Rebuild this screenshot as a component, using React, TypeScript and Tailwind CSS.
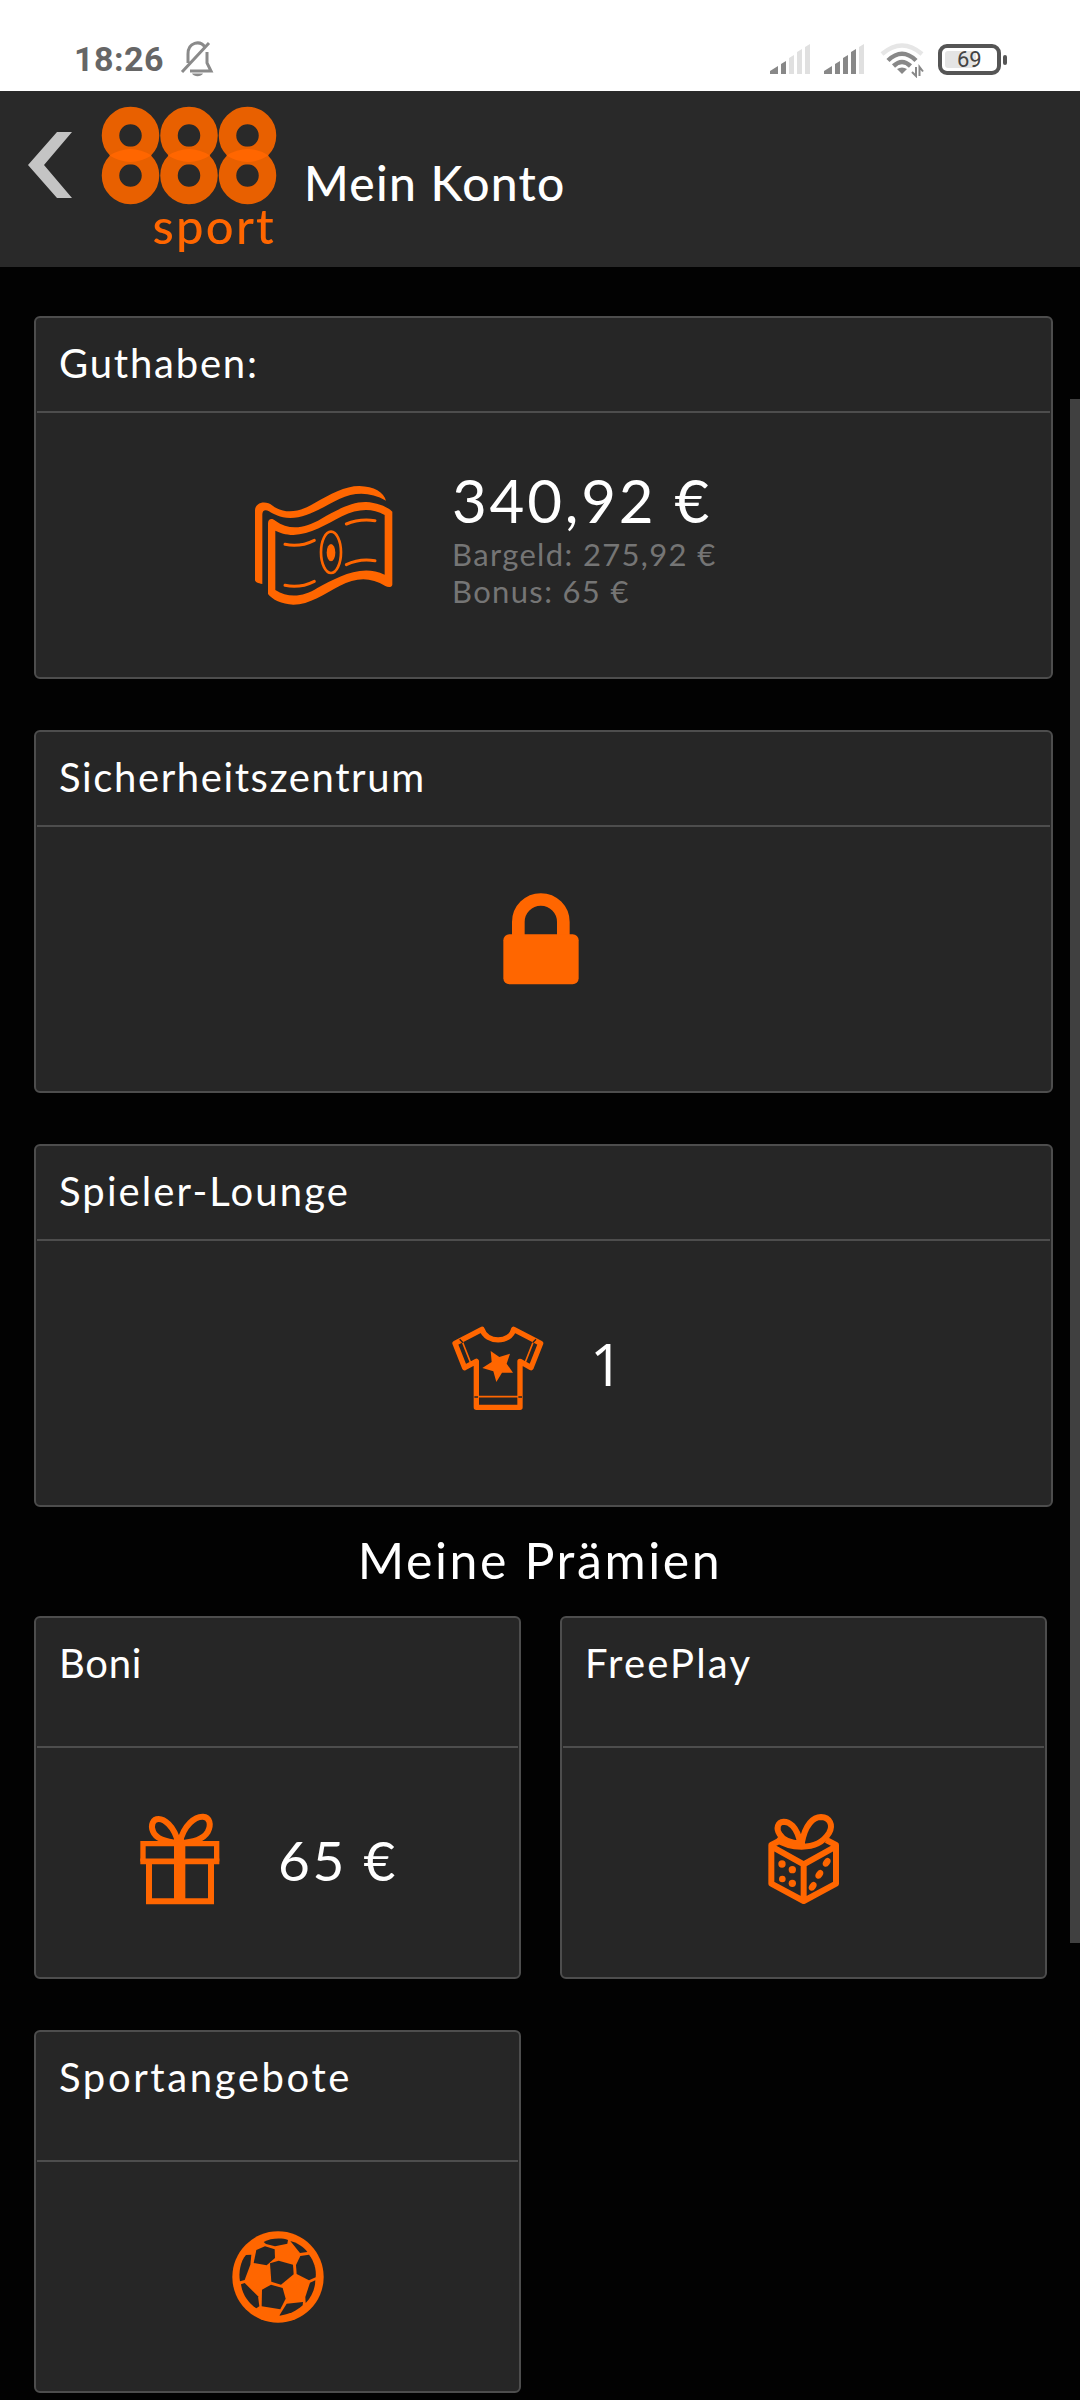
import React from 'react';
import clsx from 'clsx';

const MoneyIcon = () => (
  <svg width="144" height="126" viewBox="66 66 432 378" fill="none" stroke="#ff6600">
    <path
      d="M75 360V152C75 126 108 120 128 137C165 164 208 157 254 129C300 103 345 78 388 78C432 79 462 97 468 122C420 95 374 96 328 117C285 137 232 174 181 174C148 173 132 163 117 154C105 147 97 152 97 163V372C84 370 75 366 75 360Z"
      fill="#ff6600"
      stroke="none"
    />
    <path
      fillRule="evenodd"
      d="M114 190C114 176 126 173 136 182C178 213 226 205 274 176C320 150 365 125 408 126C442 128 474 141 487 155V374C486 383 474 383 466 378C420 349 376 353 330 377C285 401 238 434 190 434C155 433 126 418 114 402ZM136 212V390C176 416 222 410 262 384C320 354 392 310 464 344V165C424 143 382 147 336 169C290 193 240 224 190 225C166 224 150 219 136 212Z"
      fill="#ff6600"
      stroke="none"
    />
    <path
      d="M165 253C192 259 225 255 253 241M165 376C192 382 225 378 253 364M349 192C375 181 405 178 435 182M349 314C375 301 405 297 435 302"
      strokeWidth="9"
      strokeLinecap="round"
    />
    <ellipse cx="303" cy="277" rx="30" ry="62" strokeWidth="8" />
    <ellipse cx="303" cy="278" rx="13" ry="26" fill="#ff6600" stroke="none" />
  </svg>
);

const LockIcon = () => (
  <svg width="76" height="92" viewBox="69 68 228 276" fill="none">
    <path d="M115 205V155A67.500 67.500 0 0 1 250 155V205" stroke="#ff6600" strokeWidth="38" />
    <rect x="70" y="192" width="226" height="150" rx="18" fill="#ff6600" />
  </svg>
);

const ShirtIcon = () => (
  <svg width="92" height="86" viewBox="65 78 276 258" fill="none" stroke="#ff6600">
    <path
      d="M155 88L74 130L103 203L138 184V322H269V184L302 203L331 130L250 88C240 130 167 130 155 88Z"
      strokeWidth="16"
      strokeLinejoin="round"
    />
    <path d="M94 120L120 186M311 120L285 186M138 290H269" strokeWidth="5" />
    <path d="M88 118L98 128M317 118L307 128M132 291H143M264 291H275" stroke="#262626" strokeWidth="4" />
    <path
      d="M181 153L207 171L239 161L229 191L248 218L215 218L198 246L189 214L156 204L184 186Z"
      fill="#ff6600"
      stroke="none"
    />
  </svg>
);

const GiftIcon = () => (
  <svg width="80" height="92" viewBox="59 70 240 276" fill="none" stroke="#ff6600">
    <path
      d="M174 160C160 105 130 88 115 88C98 88 90 105 98 125C105 143 130 156 174 160ZM178 160C190 105 225 80 248 81C268 82 274 105 262 127C250 147 220 158 178 160Z"
      strokeWidth="18"
    />
    <path d="M68 162H289V216H68Z" strokeWidth="16" />
    <path d="M60 211H297" strokeWidth="9" />
    <path d="M86 215V335H272V215" strokeWidth="18" />
    <path d="M178 155V340" strokeWidth="34" />
  </svg>
);

const DiceIcon = () => (
  <svg width="72" height="92" viewBox="83 72 216 276" fill="none" stroke="#ff6600">
    <path
      d="M180 164C170 110 145 98 130 98C112 99 106 118 118 136C126 150 145 162 180 164ZM184 164C194 105 220 84 242 84C268 85 280 108 266 132C250 158 220 173 184 173C150 173 125 163 108 151"
      strokeWidth="18"
    />
    <path
      d="M122 153L93 168V284L190 336L287 284V168L258 153M93 172L190 226L287 172M190 226V336"
      strokeWidth="18"
      strokeLinejoin="round"
    />
    <g fill="#ff6600" stroke="none">
      <circle cx="125" cy="225" r="11" />
      <circle cx="156" cy="242" r="11" />
      <circle cx="126" cy="270" r="10" />
      <circle cx="156" cy="283" r="11" />
      <ellipse cx="259" cy="220" rx="10" ry="14" transform="rotate(35 259 220)" />
      <ellipse cx="237" cy="256" rx="10" ry="14" transform="rotate(35 237 256)" />
      <ellipse cx="217" cy="292" rx="10" ry="14" transform="rotate(35 217 292)" />
    </g>
  </svg>
);

const BallIcon = () => (
  <svg width="92" height="92" viewBox="65 64 276 276">
    <circle cx="203" cy="202" r="137" fill="#ff6600" />
    <g fill="#262626">
      <path d="M160 97C180 85 215 84 233 91L231 102L194 110L167 103Z" />
      <path d="M240 94C258 98 282 113 291 127L269 130Z" />
      <path d="M138 121L164 110L193 119L194 145L169 167L130 160Z" />
      <path d="M107 136L123 135L120 165L103 211L89 215C84 190 90 155 107 136Z" />
      <path d="M179 161L205 153L248 165L250 194L212 225L183 216Z" />
      <path d="M270 139L296 135C310 152 319 180 316 203L296 212L259 193L257 166Z" />
      <path d="M92 224L103 220L143 260L147 290L138 296C115 281 96 255 92 224Z" />
      <path d="M155 240L182 225L217 235L226 267L210 299L154 290Z" />
      <path d="M315 212C315 237 303 263 286 280L285 262L299 219Z" />
      <path d="M208 316L229 282L278 277L277 287C259 304 235 315 208 318Z" />
    </g>
  </svg>
);

const Logo = () => (
  <div className="flex w-[176px] flex-col items-end text-[#ff6600]">
    <svg width="176" height="100" viewBox="0 0 176 100" fill="none" stroke="#e86000">
      {[29.5, 88, 146.5].map((cx) => (
        <g key={cx}>
          <ellipse cx={cx} cy="29.5" rx="20" ry="20" strokeWidth="17.5" />
          <ellipse cx={cx} cy="69.5" rx="20" ry="20" strokeWidth="17.5" />
          <path d={`M${cx - 21} 49.5q21 -13 42 0q-21 13 -42 0z`} fill="#ff6600" stroke="none" />
        </g>
      ))}
    </svg>
    <span className="mr-[1px] -mt-[9px] text-[49px] font-medium leading-[56px] tracking-[2.2px]">sport</span>
  </div>
);

const StatusBar = () => (
  <div className="flex h-[91px] items-end justify-between bg-white pb-[12px] pl-[74px] pr-[73px]">
    <div className="flex items-center">
      <span className="w-[102px] font-[Roboto] text-[34px] font-bold leading-[40px] tracking-[0.5px] text-[#666]">
        18:26
      </span>
      <svg className="ml-[4px]" width="34" height="40" viewBox="0 0 34 40" fill="none" stroke="#8a8a8a" strokeWidth="3">
        <path d="M8 24V15C8 3 20 1 25 8M27 13V24L31 32H10M2 33L29 4" />
        <path d="M12 34.5H23C21 38 14 38 12 34.5Z" fill="#8a8a8a" stroke="none" />
      </svg>
    </div>
    <div className="flex items-end pb-[4px]">
      <svg width="42" height="32" viewBox="0 0 42 32">
        <path d="M1 28L9 23V31H1ZM12 21L17 18V31H12Z" fill="#888" />
        <path d="M20 15L25 12V31H20ZM28 9L33 6V31H28ZM36 4L41 1V31H36Z" fill="#e0e0e0" />
      </svg>
      <svg className="ml-[12px]" width="42" height="32" viewBox="0 0 42 32">
        <path d="M1 28L9 23V31H1ZM12 21L17 18V31H12ZM20 15L25 12V31H20ZM28 9L33 6V31H28Z" fill="#888" />
        <path d="M36 4L41 1V31H36Z" fill="#e0e0e0" />
      </svg>
      <svg className="ml-[15px] -mb-[3px]" width="44" height="36" viewBox="0 0 44 36" fill="none" stroke="#888" strokeWidth="4.5">
        <path d="M2 12Q22 -5 42 12" stroke="#e6e6e6" />
        <path d="M8 18.500Q22 5 36 18.500M13.500 24Q22 16 30.500 24" />
        <path d="M17 27Q22 24 27 27L22 32Z" fill="#888" stroke="none" />
        <path d="M36 25V34L32 30M39.500 34V25L43 29.500" strokeWidth="2" />
      </svg>
      <div className="ml-[14px] flex items-center">
        <div className="flex h-[31px] w-[63px] items-center rounded-[9px] border-4 border-[#555] pl-[3px]">
          <div className="flex h-[17px] w-[31px] items-center rounded-[3px] bg-[#e4e4e4] pl-[12px]">
            <span className="font-[Roboto] text-[22px] leading-none text-[#444]">69</span>
          </div>
        </div>
        <div className="ml-[2px] h-[10px] w-[4px] rounded-full bg-[#555]" />
      </div>
    </div>
  </div>
);

interface ICardProps {
  title: string;
  titleClass: string;
  small?: boolean;
  children: React.ReactNode;
}

const Card = ({ title, titleClass, small, children }: ICardProps) => (
  <section
    className={clsx(
      'flex h-[363px] flex-col rounded-[6px] border-2 border-[#4d4d4d] bg-[#262626]',
      small ? 'w-[487px]' : 'w-[1019px]'
    )}
  >
    <h2
      className={clsx(
        'mx-px border-b-2 border-[#4d4d4d] pl-[22px] leading-[91px]',
        small ? 'h-[130px]' : 'h-[95px]',
        titleClass
      )}
    >
      {title}
    </h2>
    <div className="flex flex-1 items-start">{children}</div>
  </section>
);

const App = () => {
  return (
    <div className="h-[2400px] w-[1080px] overflow-hidden bg-[#020202] font-[Lato,sans-serif] text-white">
      <StatusBar />
      <header className="flex h-[176px] items-start bg-[#292929] pl-[28px]">
        <svg className="mt-[41px]" width="44" height="66" viewBox="0 0 44 66">
          <path d="M29 0H44L16 33L44 66H29L0 33Z" fill="#c4c4c4" />
        </svg>
        <div className="ml-[29px] mt-[15px]">
          <Logo />
        </div>
        <h1 className="ml-[27px] mt-[64px] text-[48px] font-medium leading-[56px] tracking-[1.3px]">
          Mein Konto
        </h1>
      </header>

      <div className="flex">
        <main className="w-[1070px] pl-[34px] pt-[49px]">
          <div className="flex flex-col gap-[51px]">
            <Card title="Guthaben:" titleClass="text-[40px] tracking-[1.8px]">
              <div className="ml-[216px] mt-[69px]">
                <MoneyIcon />
              </div>
              <div className="ml-[56px] mt-[51px] flex flex-col">
                <span className="text-[60px] leading-[72px] tracking-[2.8px]">340,92 €</span>
                <span className="text-[31px] leading-[37px] tracking-[1.35px] text-[#757575]">
                  Bargeld: 275,92 €
                </span>
                <span className="text-[31px] leading-[37px] tracking-[1.35px] text-[#757575]">Bonus: 65 €</span>
              </div>
            </Card>
            <Card title="Sicherheitszentrum" titleClass="text-[40px] tracking-[1.6px]">
              <div className="ml-[467px] mt-[66px]">
                <LockIcon />
              </div>
            </Card>
            <Card title="Spieler-Lounge" titleClass="text-[40px] tracking-[2.1px]">
              <div className="ml-[416px] mt-[85px]">
                <ShirtIcon />
              </div>
              <span className="ml-[46px] mt-[82px] font-['Open_Sans'] text-[58px] leading-[82px]">1</span>
            </Card>
          </div>

          <h2 className="mt-[23px] h-[86px] pr-[24px] text-center text-[50px] leading-[60px] tracking-[2.6px]">
            Meine Prämien
          </h2>

          <div className="flex flex-wrap gap-x-[39px] gap-y-[51px]">
            <Card small title="Boni" titleClass="text-[40px] tracking-[0.7px]">
              <div className="ml-[104px] mt-[65px]">
                <GiftIcon />
              </div>
              <span className="ml-[58px] mt-[79px] text-[55px] leading-[66px] tracking-[2.5px]">65 €</span>
            </Card>
            <Card small title="FreePlay" titleClass="text-[40px] tracking-[2.2px]">
              <div className="ml-[206px] mt-[65px]">
                <DiceIcon />
              </div>
            </Card>
            <Card small title="Sportangebote" titleClass="text-[40px] tracking-[2.6px]">
              <div className="ml-[196px] mt-[69px]">
                <BallIcon />
              </div>
            </Card>
          </div>
        </main>
        <div className="mt-[132px] h-[1544px] w-[10px] bg-[#404040]" />
      </div>
    </div>
  );
};

export default App;
